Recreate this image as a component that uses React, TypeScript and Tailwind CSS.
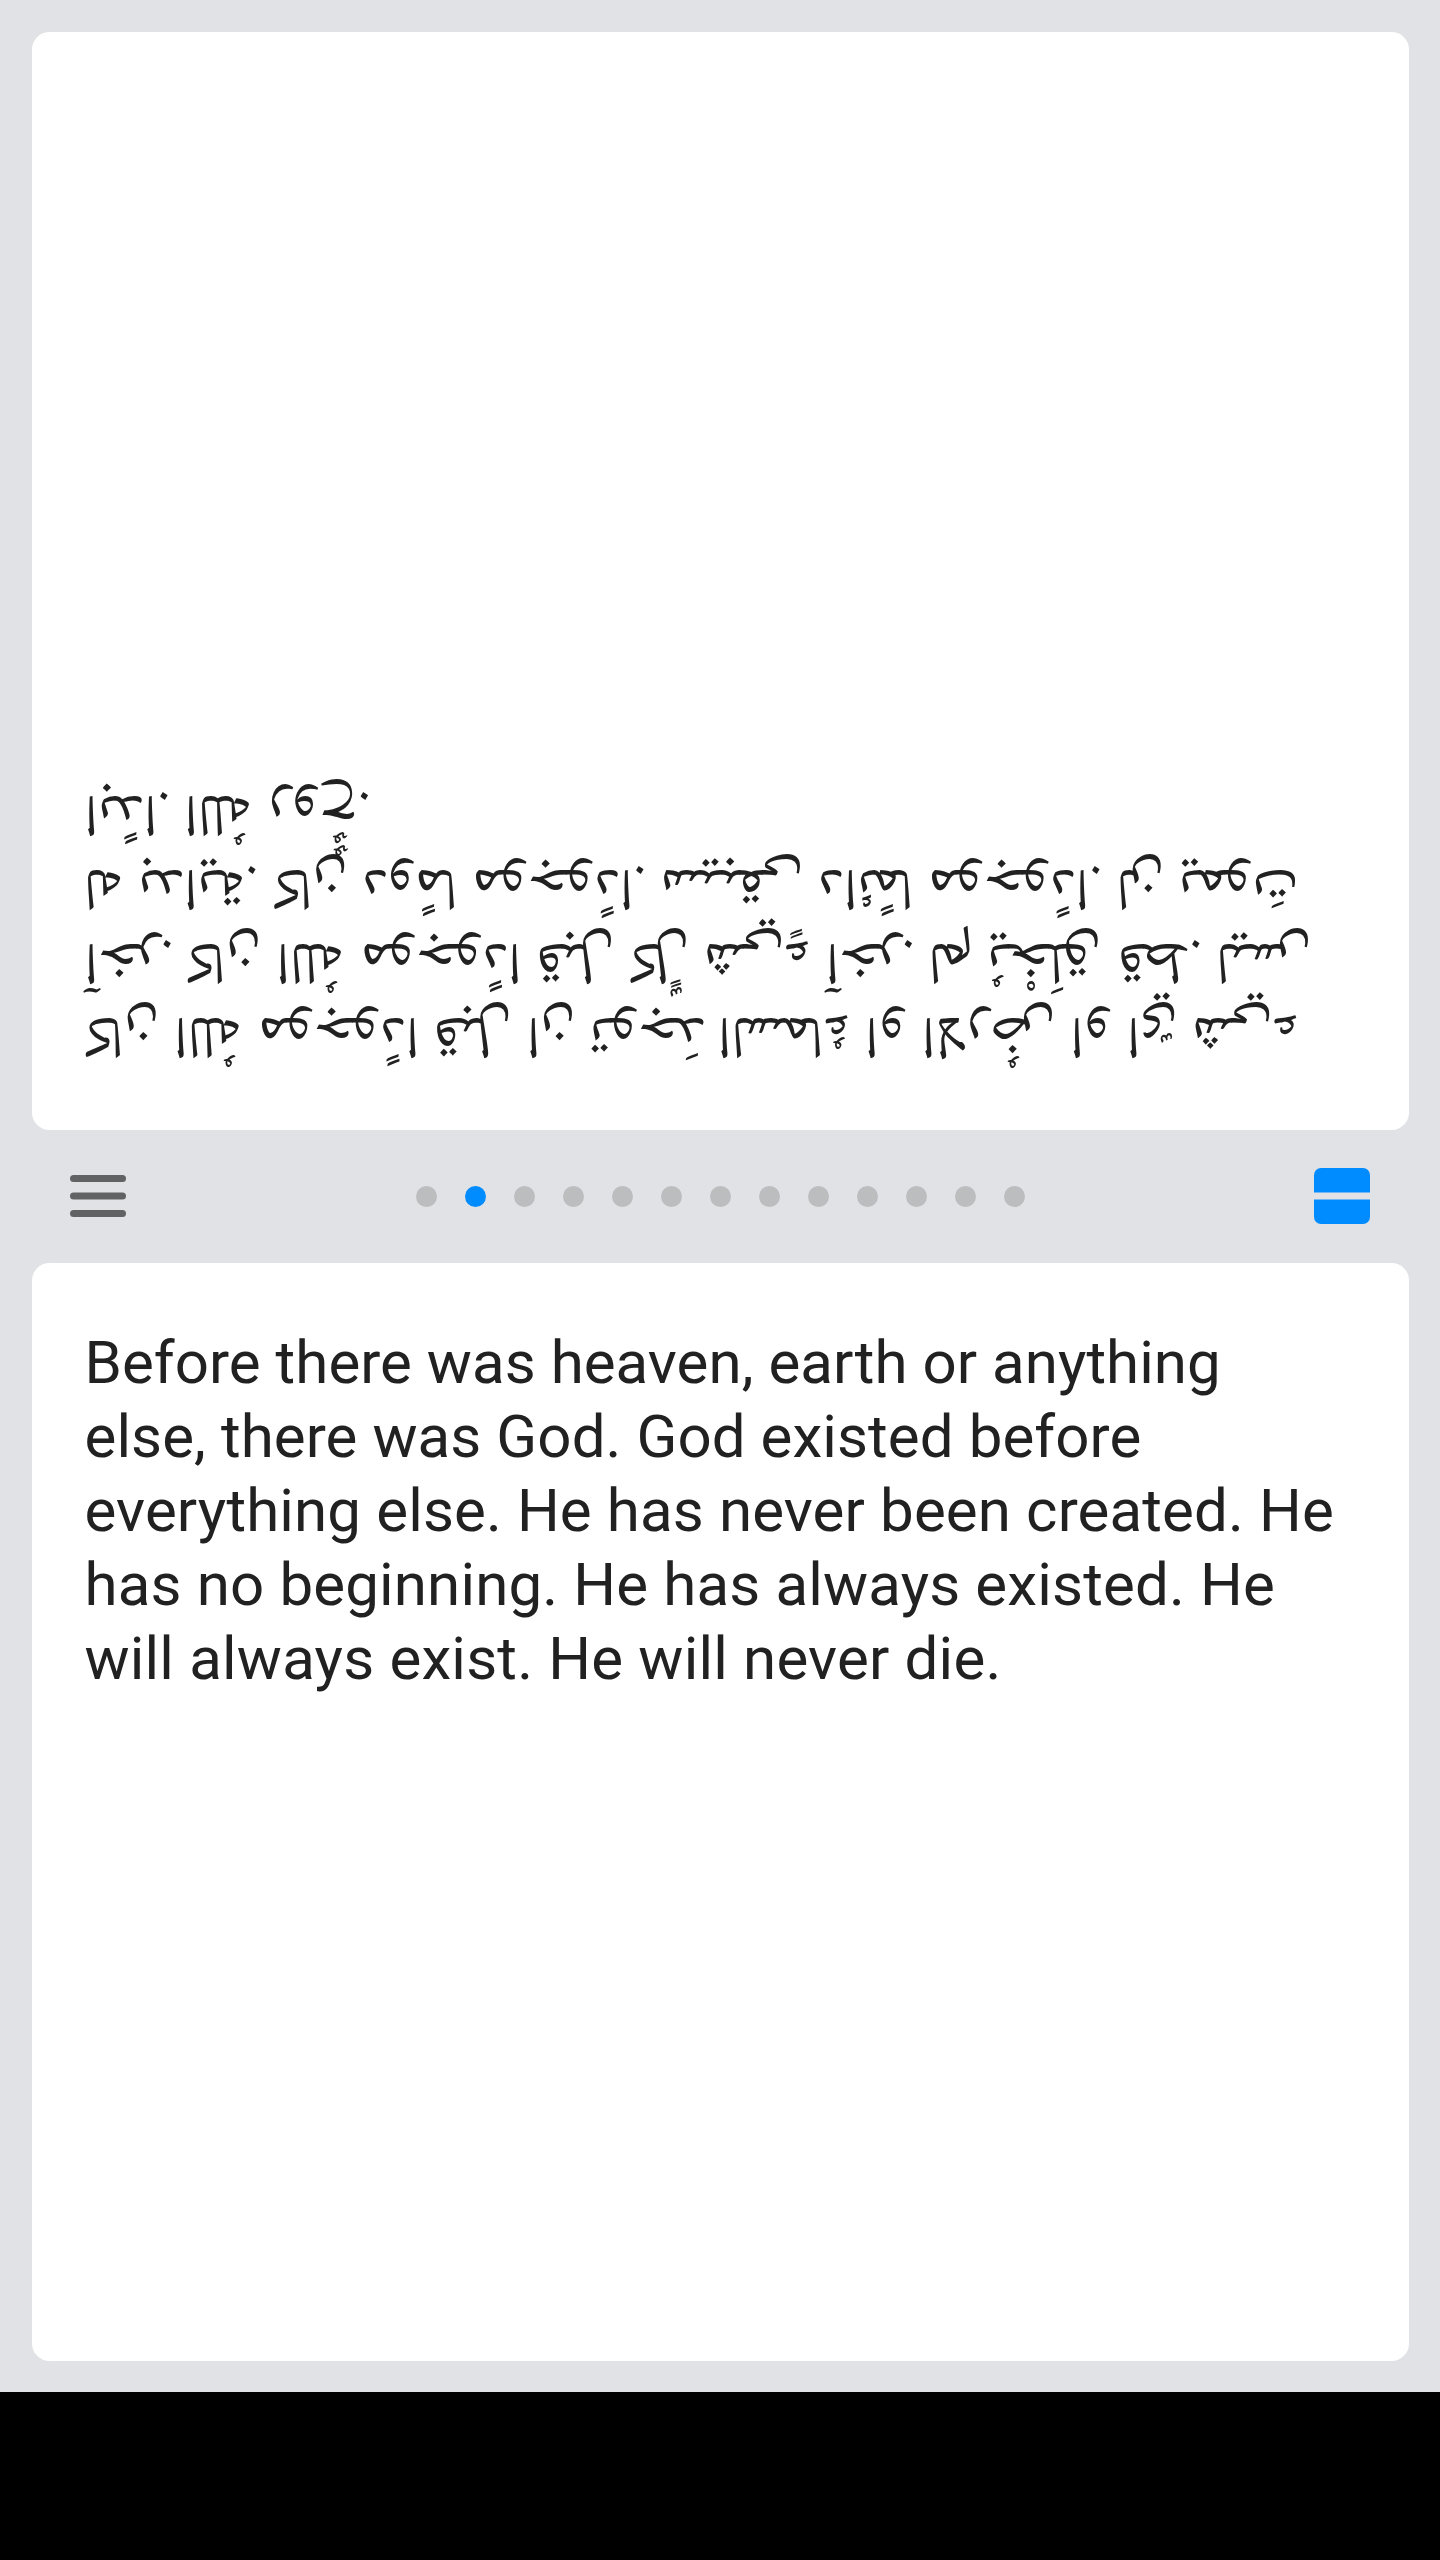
const arabicLines = [
  {
    spacing: '[word-spacing:1px]',
    content: (
      <>
        كان <span className="me-[2px]">اللهُ</span> موجودًا قبل ان <span className="me-[-2px]">توجدَ</span> السماءُ او الارضُ او ايّ شيء
      </>
    ),
  },
  {
    spacing: '[word-spacing:1.2px]',
    content: (
      <>
        <span className="me-[-1.5px]">آخر.</span> كان <span className="me-[2px]">اللهُ</span> موجودًا قبل كلٍّ شيءٍ آخر. لم{' '}
        <span className="me-[2px]">يُخْلَق</span> قط. ليس
      </>
    ),
  },
  {
    spacing: '[word-spacing:1.45px]',
    content: <>له بداية. كان دومًا موجودًا. سيبقى دائمًا موجودًا. لن يموتَ</>,
  },
  {
    spacing: '[word-spacing:0.6px]',
    content: (
      <>
        ابدًا. <span className="me-[2px]">اللهُ</span> روحٌٌ.
      </>
    ),
  },
];

const englishLines = [
  { text: 'Before there was heaven, earth or anything', spacing: 'tracking-[0.05px]' },
  { text: 'else, there was God. God existed before', spacing: 'tracking-[0.09px]' },
  { text: 'everything else. He has never been created. He', spacing: 'tracking-[0.14px]' },
  { text: 'has no beginning. He has always existed. He', spacing: 'tracking-[0.16px]' },
  { text: 'will always exist. He will never die.', spacing: 'tracking-[0.2px]' },
];

const PAGE_COUNT = 13;
const CURRENT_PAGE = 1;

function MenuIcon() {
  return (
    <svg width="56" height="42" viewBox="0 0 56 42" fill="#616264">
      <rect y="0" width="56" height="7" rx="3.5" />
      <rect y="17.5" width="56" height="7" rx="3.5" />
      <rect y="35" width="56" height="7" rx="3.5" />
    </svg>
  );
}

function SplitIcon() {
  return (
    <svg width="56" height="56" viewBox="0 0 56 56" fill="#008cff">
      <path d="M0 24.5V7a7 7 0 0 1 7-7h42a7 7 0 0 1 7 7v17.5z" />
      <path d="M0 31.5V49a7 7 0 0 0 7 7h42a7 7 0 0 0 7-7V31.5z" />
    </svg>
  );
}

export default function App() {
  return (
    <div className="flex h-[2560px] w-[1440px] flex-col bg-black">
      <main className="flex h-[2392px] flex-col bg-[#e1e2e6] pt-8 pr-[31px] pb-[31px] pl-8">
        <section
          dir="rtl"
          lang="ar"
          className="h-[1098px] rotate-180 rounded-[17.5px] bg-white px-[52.5px] pt-[62px] font-['Noto_Naskh_Arabic','DejaVu_Sans',sans-serif] text-[60px] leading-[74px] whitespace-nowrap text-[#212121]"
        >
          {arabicLines.map((line, i) => (
            <p key={i} className={`h-[74px] ${line.spacing}`}>
              {line.content}
            </p>
          ))}
        </section>

        <nav className="flex h-[133px] items-center justify-between pr-[39px] pb-px pl-[38px]">
          <button aria-label="Menu" className="block">
            <MenuIcon />
          </button>
          <div className="mt-px flex gap-7">
            {Array.from({ length: PAGE_COUNT }, (_, i) => (
              <span
                key={i}
                className={`size-[21px] rounded-full ${i === CURRENT_PAGE ? 'bg-[#008cff]' : 'bg-[#bcbdbf]'}`}
              />
            ))}
          </div>
          <button aria-label="Split view" className="block">
            <SplitIcon />
          </button>
        </nav>

        <section
          lang="en"
          className="h-[1098px] rounded-[17.5px] bg-white px-[52.5px] pt-[63px] font-['Roboto',sans-serif] text-[60px] leading-[74px] whitespace-nowrap text-[#212121]"
        >
          {englishLines.map((line) => (
            <p key={line.text} className={line.spacing}>
              {line.text}
            </p>
          ))}
        </section>
      </main>
    </div>
  );
}
